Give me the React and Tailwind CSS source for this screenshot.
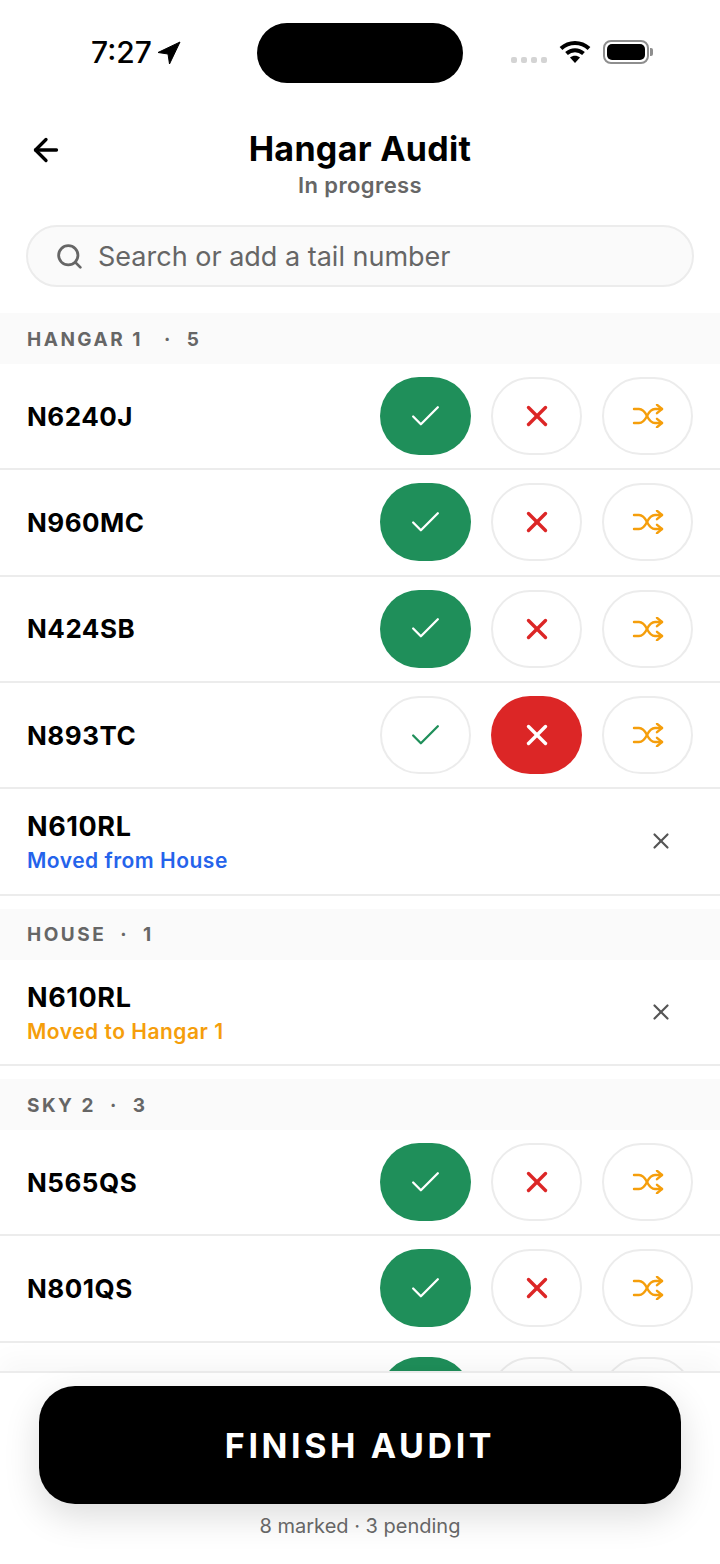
import React from "react";
import { ArrowLeft, Search, Check, X } from "lucide-react";

function ShuffleIcon() {
  return (
    <svg width="32" height="24" viewBox="0 0 32 24" fill="none" stroke="#f59e0b" strokeWidth="2.4" strokeLinecap="round" strokeLinejoin="round">
      <path d="M2 5h5c4 0 6 3 8 7s4 7 8 7h7" />
      <path d="M2 19h5c4 0 6-3 8-7s4-7 8-7h7" />
      <path d="M25 0.800 30 5l-5 4.200" />
      <path d="M25 14.800 30 19l-5 4.200" />
    </svg>
  );
}

function Actions({ state }) {
  return (
    <div className="flex items-center gap-[20px]">
      <div className={`w-[91px] h-[78px] rounded-[39px] flex items-center justify-center ${state === "ok" ? "bg-[#1f8f5a]" : "border-2 border-[#ececec] bg-white"}`}>
        <Check size={37} strokeWidth={1.5} className={state === "ok" ? "text-white" : "text-[#1f8f5a]"} />
      </div>
      <div className={`w-[91px] h-[78px] rounded-[39px] flex items-center justify-center ${state === "no" ? "bg-[#dc2626]" : "border-2 border-[#ececec] bg-white"}`}>
        <X size={34} strokeWidth={2.4} className={state === "no" ? "text-white" : "text-[#dc2626]"} />
      </div>
      <div className="w-[91px] h-[78px] rounded-[39px] flex items-center justify-center border-2 border-[#ececec] bg-white">
        <ShuffleIcon />
      </div>
    </div>
  );
}

function Row({ tail, state }) {
  return (
    <div className="h-[106.33px] shrink-0 flex items-center justify-between px-[27px] border-b-2 border-[#ececec] bg-white">
      <span className="text-[26px] font-bold text-black tracking-[0.5px]">{tail}</span>
      <Actions state={state} />
    </div>
  );
}

function MovedRow({ tail, note, color }) {
  return (
    <div className="h-[106.33px] shrink-0 flex items-center justify-between pl-[27px] pr-[46px] border-b-2 border-[#ececec] bg-white">
      <div className="flex flex-col pt-[4px]">
        <span className="text-[27px] leading-[36px] font-bold text-black tracking-[0.6px]">{tail}</span>
        <span className={`text-[21px] leading-[32px] font-semibold tracking-[0.5px] ${color}`}>{note}</span>
      </div>
      <X size={26} strokeWidth={2} className="text-[#555555]" />
    </div>
  );
}

function Section({ name, count, gap }) {
  return (
    <div className={`h-[51px] shrink-0 flex items-center pl-[27px] pt-[3px] bg-[#fafafa] text-[19px] font-bold tracking-[2.5px] text-[#666666] ${gap || ""}`}>
      <span className="whitespace-pre">{name}</span>
      <span className="mx-[14px]">·</span>
      <span>{count}</span>
    </div>
  );
}

export default function App() {
  return (
    <div className="w-[720px] h-[1564px] flex flex-col overflow-hidden bg-white font-['Inter',sans-serif]">
      <div className="h-[83px] pt-[23px] shrink-0 flex items-start pl-[91px]">
        <div className="flex items-start pt-[9px] gap-[5px] w-[166px] shrink-0">
          <span className="text-[30px] leading-[40px] font-medium text-black">7:27</span>
          <svg width="24" height="24" viewBox="0 0 24 24" className="mt-[9px]"><path d="M23 1 1 11.500 11 13l1.500 10z" fill="#000" stroke="#000" strokeWidth="1" strokeLinejoin="round" /></svg>
        </div>
        <div className="w-[206px] h-[60px] rounded-[30px] bg-black shrink-0" />
        <div className="flex items-start pt-[17px] ml-[48px] gap-[12px]">
          <div className="flex gap-[4px] pt-[17px]">
            <span className="w-[6px] h-[6px] rounded-[2px] bg-[#d4d4d4]" />
            <span className="w-[6px] h-[6px] rounded-[2px] bg-[#d4d4d4]" />
            <span className="w-[6px] h-[6px] rounded-[2px] bg-[#d4d4d4]" />
            <span className="w-[6px] h-[6px] rounded-[2px] bg-[#d4d4d4]" />
          </div>
          <svg width="32" height="24" viewBox="0 0 32 24">
            <path d="M2 8.500C10 1 22 1 30 8.500" fill="none" stroke="#000" strokeWidth="4" />
            <path d="M7.500 13.500C12.500 9 19.500 9 24.500 13.500" fill="none" stroke="#000" strokeWidth="4" />
            <path d="M11 17.500 16 23l5-5.500C18 15 14 15 11 17.500z" fill="#000" />
          </svg>
          <div className="flex items-center gap-[1px]">
            <div className="w-[46px] h-[24px] rounded-[8px] border-2 border-[#8e8e8e] p-[2px]">
              <div className="w-full h-full rounded-[5px] bg-black" />
            </div>
            <div className="w-[3px] h-[8px] rounded-r-[2px] bg-[#8e8e8e]" />
          </div>
        </div>
      </div>

      <div className="h-[142px] shrink-0 relative flex flex-col items-center pt-[43px]">
        <ArrowLeft size={36} strokeWidth={2.2} className="absolute left-[28px] top-[49px] text-black" />
        <span className="text-[34px] leading-[46px] font-bold text-black tracking-[0.3px]">Hangar Audit</span>
        <span className="text-[22px] leading-[26px] font-semibold text-[#666666] tracking-[0.4px]">In progress</span>
      </div>

      <div className="px-[26px] shrink-0">
        <div className="h-[62px] rounded-[31px] border-2 border-[#ececec] bg-[#fafafa] flex items-center pl-[27px] gap-[14px]">
          <Search size={29} strokeWidth={2.3} className="text-[#666666]" />
          <span className="text-[27px] pt-[2px] text-[#666666]">Search or add a tail number</span>
        </div>
      </div>

      <div className="flex-1 min-h-0 overflow-hidden flex flex-col pt-[26px]">
        <Section name={"HANGAR 1\u00a0"} count="5" />
        <Row tail="N6240J" state="ok" />
        <Row tail="N960MC" state="ok" />
        <Row tail="N424SB" state="ok" />
        <Row tail="N893TC" state="no" />
        <MovedRow tail="N610RL" note="Moved from House" color="text-[#2563eb]" />
        <Section name="HOUSE" count="1" gap="mt-[13px]" />
        <MovedRow tail="N610RL" note="Moved to Hangar 1" color="text-[#f59e0b]" />
        <Section name="SKY 2" count="3" gap="mt-[13px]" />
        <Row tail="N565QS" state="ok" />
        <Row tail="N801QS" state="ok" />
        <div className="h-[106px] shrink-0 flex items-center justify-end px-[27px] bg-white">
          <Actions state="ok" />
        </div>
      </div>

      <div className="h-[193px] shrink-0 relative z-10 bg-white border-t-2 border-[#ececec] shadow-[0_-12px_24px_rgba(0,0,0,0.03)] flex flex-col items-center pt-[13px]">
        <div className="w-[642px] h-[118px] rounded-[36px] bg-black shadow-[0_12px_36px_rgba(0,0,0,0.14)] flex items-center justify-center">
          <span className="text-[34px] font-bold text-white tracking-[3.6px]">FINISH AUDIT</span>
        </div>
        <span className="mt-[8px] text-[20px] leading-[28px] text-[#666666]">8 marked · 3 pending</span>
      </div>
    </div>
  );
}
